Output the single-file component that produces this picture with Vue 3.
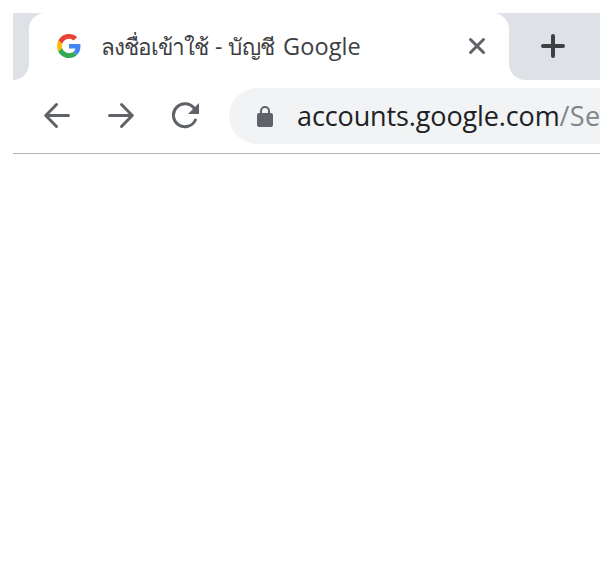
<script setup>
</script>

<template>
  <main class="browser">
    <header class="tabs">
      <div class="previous"></div>
      <div class="tab-shell">
        <div class="tab">
          <svg class="logo" viewBox="0 0 48 48" aria-hidden="true">
            <path fill="#ea4335" d="M24 9.5c3.54 0 6.71 1.22 9.21 3.6l6.85-6.85C35.9 2.38 30.47 0 24 0 14.62 0 6.51 5.38 2.56 13.22l7.98 6.19C12.43 13.72 17.74 9.5 24 9.5z" />
            <path fill="#4285f4" d="M46.98 24.55c0-1.57-.15-3.09-.38-4.55H24v9.02h12.94c-.58 2.96-2.26 5.48-4.78 7.18l7.73 6c4.51-4.18 7.09-10.36 7.09-17.65z" />
            <path fill="#fbbc05" d="M10.53 28.59A14.5 14.5 0 0 1 9.77 24c0-1.6.27-3.14.76-4.59l-7.98-6.19A23.9 23.9 0 0 0 0 24c0 3.88.92 7.54 2.56 10.78z" />
            <path fill="#34a853" d="M24 48c6.48 0 11.93-2.13 15.89-5.81l-7.73-6c-2.15 1.45-4.92 2.3-8.16 2.3-6.26 0-11.57-4.22-13.47-9.91l-7.98 6.19C6.51 42.62 14.62 48 24 48z" />
          </svg>
          <h1 class="title"><span class="signin">ลงชื่อเข้าใช้</span> <span class="dash">-</span> <span class="account">บัญชี</span> <span class="google">Google</span></h1>
          <svg class="close" viewBox="0 0 18 18" aria-hidden="true"><path d="M2.5 2.5l13 13M15.5 2.5l-13 13" /></svg>
        </div>
      </div>
      <div class="strip">
        <svg class="plus" viewBox="0 0 24 24" aria-hidden="true"><path d="M2 12h20M12 2v20" /></svg>
      </div>
    </header>
    <nav class="toolbar">
      <svg class="nav-icon" viewBox="0 0 28 28" aria-hidden="true"><path d="M25.5 13.5H3M13.5 2.5L2.7 13.5l10.8 11" /></svg>
      <svg class="nav-icon" viewBox="0 0 28 28" aria-hidden="true"><path d="M2.5 13.5H25M14.5 2.5l10.8 11-10.8 11" /></svg>
      <svg class="nav-icon" viewBox="0 0 28 28" aria-hidden="true"><path d="M24.4 18A11.5 11.5 0 1 1 23.4 6.7" /><path class="solid" d="M28 1v11H17z" /></svg>
      <div class="address">
        <svg class="lock" viewBox="0 0 16 21" aria-hidden="true"><path class="shackle" d="M4 8V5a4 4 0 0 1 8 0v3" /><rect y="7" width="16" height="14" rx="2" /></svg>
        <span class="url">accounts.google.com<span class="path">/Se</span></span>
      </div>
    </nav>
  </main>
</template>

<style>
body { background: #fff; }
</style>

<style scoped>
.browser { box-sizing: border-box; width: 600px; height: 582px; padding: 13px 0 0 13px; overflow: hidden; background: #fff; font-family: "Open Sans", "Noto Sans", sans-serif; }
.tabs { display: flex; height: 67px; }
.previous { width: 16px; background: #dee1e6; border-radius: 0 0 16px 0; }
.tab-shell { width: 480px; background: linear-gradient(#dee1e6 20px, #fff 20px); }
.tab { box-sizing: border-box; display: flex; align-items: center; height: 67px; padding: 0 23px 1px 28px; background: #fff; border-radius: 16px 16px 0 0; }
.logo { width: 24px; height: 24px; flex: none; }
.title { display: flex; align-items: baseline; width: 260px; margin: 0 0 0 20px; font-size: 23px; line-height: 32px; font-weight: 400; color: #3c4043; white-space: nowrap; }
.signin { width: 114px; font-size: 22.5px; letter-spacing: -0.95px; }
.dash { width: 13px; }
.account { width: 55px; font-size: 22.5px; letter-spacing: -0.5px; }
.google { letter-spacing: 0.1px; font-size: 23.5px; }
.close { width: 18px; height: 18px; margin-left: auto; fill: none; stroke: #5f6368; stroke-width: 3; stroke-linecap: round; }
.strip { box-sizing: border-box; flex: 1; padding: 21px 0 0 32px; background: #dee1e6; border-radius: 0 0 0 16px; }
.plus { display: block; width: 24px; height: 24px; fill: none; stroke: #3c4043; stroke-width: 4; stroke-linecap: round; }
.toolbar { box-sizing: border-box; display: flex; align-items: center; height: 74px; padding: 8px 0 9px 30px; border-bottom: 1px solid #b1b3b5; }
.nav-icon { flex: none; width: 28px; height: 28px; margin-right: 36px; fill: none; stroke: #5f6368; stroke-width: 3; stroke-linecap: round; stroke-linejoin: round; }
.nav-icon .solid { fill: #5f6368; stroke: none; }
.nav-icon:nth-child(3) { margin-right: 30px; }
.address { box-sizing: border-box; display: flex; align-items: center; flex: 1; min-width: 0; height: 56px; padding-left: 28px; overflow: hidden; background: #f1f3f4; border-radius: 28px 0 0 28px; }
.lock { flex: none; width: 16px; height: 21px; margin: 1px 24px 0 0; fill: #5f6368; }
.shackle { fill: none; stroke: #5f6368; stroke-width: 2; }
.url { font-size: 27px; line-height: 38px; letter-spacing: -0.12px; color: #202124; white-space: nowrap; }
.path { color: #80868b; letter-spacing: 0.3px; }
</style>
